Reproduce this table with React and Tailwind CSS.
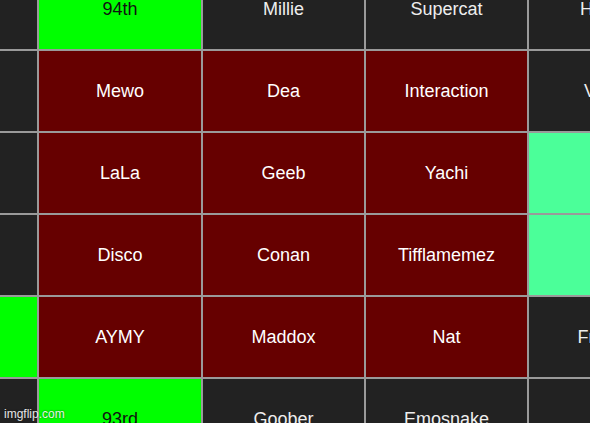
import React from "react";

const D = "bg-[#222222] text-[#eeeeee]";
const R = "bg-[#660000] text-[#ffffff]";
const G = "bg-[#00ff00] text-[#111111]";
const M = "bg-[#4bff99] text-[#111111]";

const rows = [
  [[D, ""], [G, "94th"], [D, "Millie"], [D, "Supercat"], [D, "Hopper"]],
  [[D, ""], [R, "Mewo"], [R, "Dea"], [R, "Interaction"], [D, "Vortex"]],
  [[D, ""], [R, "LaLa"], [R, "Geeb"], [R, "Yachi"], [M, ""]],
  [[D, ""], [R, "Disco"], [R, "Conan"], [R, "Tifflamemez"], [M, ""]],
  [[G, ""], [R, "AYMY"], [R, "Maddox"], [R, "Nat"], [D, "Franklin"]],
  [[D, ""], [G, "93rd"], [D, "Goober"], [D, "Emosnake"], [D, ""]],
];

export default function App() {
  return (
    <div
      className="relative w-[590px] h-[423px] overflow-hidden bg-[#222222]"
      style={{ fontFamily: '"Liberation Sans", Arial, sans-serif' }}
    >
      <div className="ml-[-124px] mt-[-31px] grid grid-cols-[161px_162px_161px_161px_161px] gap-[2px] bg-[#9a9a9a] w-max">
        {rows.map((row, i) =>
          row.map(([cls, text], j) => (
            <div
              key={`${i}-${j}`}
              className={`${cls} h-20 flex items-center justify-center text-[18px] leading-none whitespace-nowrap`}
            >
              {text}
            </div>
          ))
        )}
      </div>
      <div className="absolute left-[4px] bottom-[3px] text-[12px] leading-none text-white/90 [text-shadow:0_0_2px_rgba(0,0,0,0.6)]">
        imgflip.com
      </div>
    </div>
  );
}
